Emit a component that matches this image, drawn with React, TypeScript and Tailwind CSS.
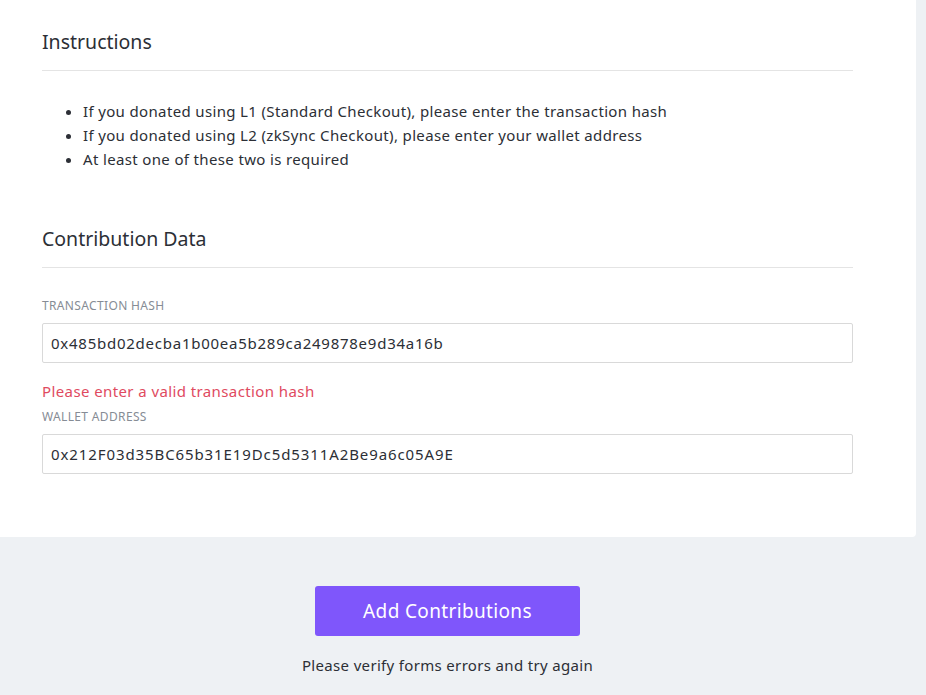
export default function App() {
  return (
    <div className="min-h-[695px] bg-[#eef1f4] text-[#2c2f36]" style={{ fontFamily: '"Noto Sans", sans-serif' }}>
      <div className="w-[916px] bg-white rounded-br-[4px] pl-[42px] pr-[63px] pt-[28px] pb-[63px]">
        <h2 className="text-[19.5px] leading-[28px] text-[#2c2f36]">Instructions</h2>
        <div className="mt-[14px] border-t border-[#e4e4e4]" />
        <ul className="mt-[28px] pl-[41px] list-disc text-[15px] leading-[24px] tracking-[0.35px]">
          <li>If you donated using L1 (Standard Checkout), please enter the transaction hash</li>
          <li>If you donated using L2 (zkSync Checkout), please enter your wallet address</li>
          <li>At least one of these two is required</li>
        </ul>
        <h2 className="mt-[54px] text-[19.5px] leading-[28px] text-[#2c2f36]">Contribution Data</h2>
        <div className="mt-[14px] border-t border-[#e4e4e4]" />
        <label className="block mt-[30px] text-[12px] leading-[16px] tracking-[0.35px] text-[#868c95] uppercase">Transaction Hash</label>
        <div className="mt-[9px] h-[40px] border border-[#d9d9d9] rounded-[2px] flex items-center px-[8px] text-[15px] tracking-[0.75px]">
          0x485bd02decba1b00ea5b289ca249878e9d34a16b
        </div>
        <div className="mt-[18px] text-[15px] leading-[20px] tracking-[0.4px] text-[#e04a5f]">Please enter a valid transaction hash</div>
        <label className="block mt-[8px] text-[12px] leading-[16px] tracking-[0.35px] text-[#868c95] uppercase">Wallet Address</label>
        <div className="mt-[9px] h-[40px] border border-[#d9d9d9] rounded-[2px] flex items-center px-[8px] text-[15px] tracking-[0.9px]">
          0x212F03d35BC65b31E19Dc5d5311A2Be9a6c05A9E
        </div>
      </div>
      <div className="flex flex-col items-center pt-[49px] pr-[31px]">
        <button className="w-[265px] h-[50px] rounded-[3px] bg-[#7f56fb] text-white text-[19px] tracking-[0.35px]">Add Contributions</button>
        <div className="mt-[19px] text-[15px] leading-[20px] tracking-[0.33px]">Please verify forms errors and try again</div>
      </div>
    </div>
  );
}
